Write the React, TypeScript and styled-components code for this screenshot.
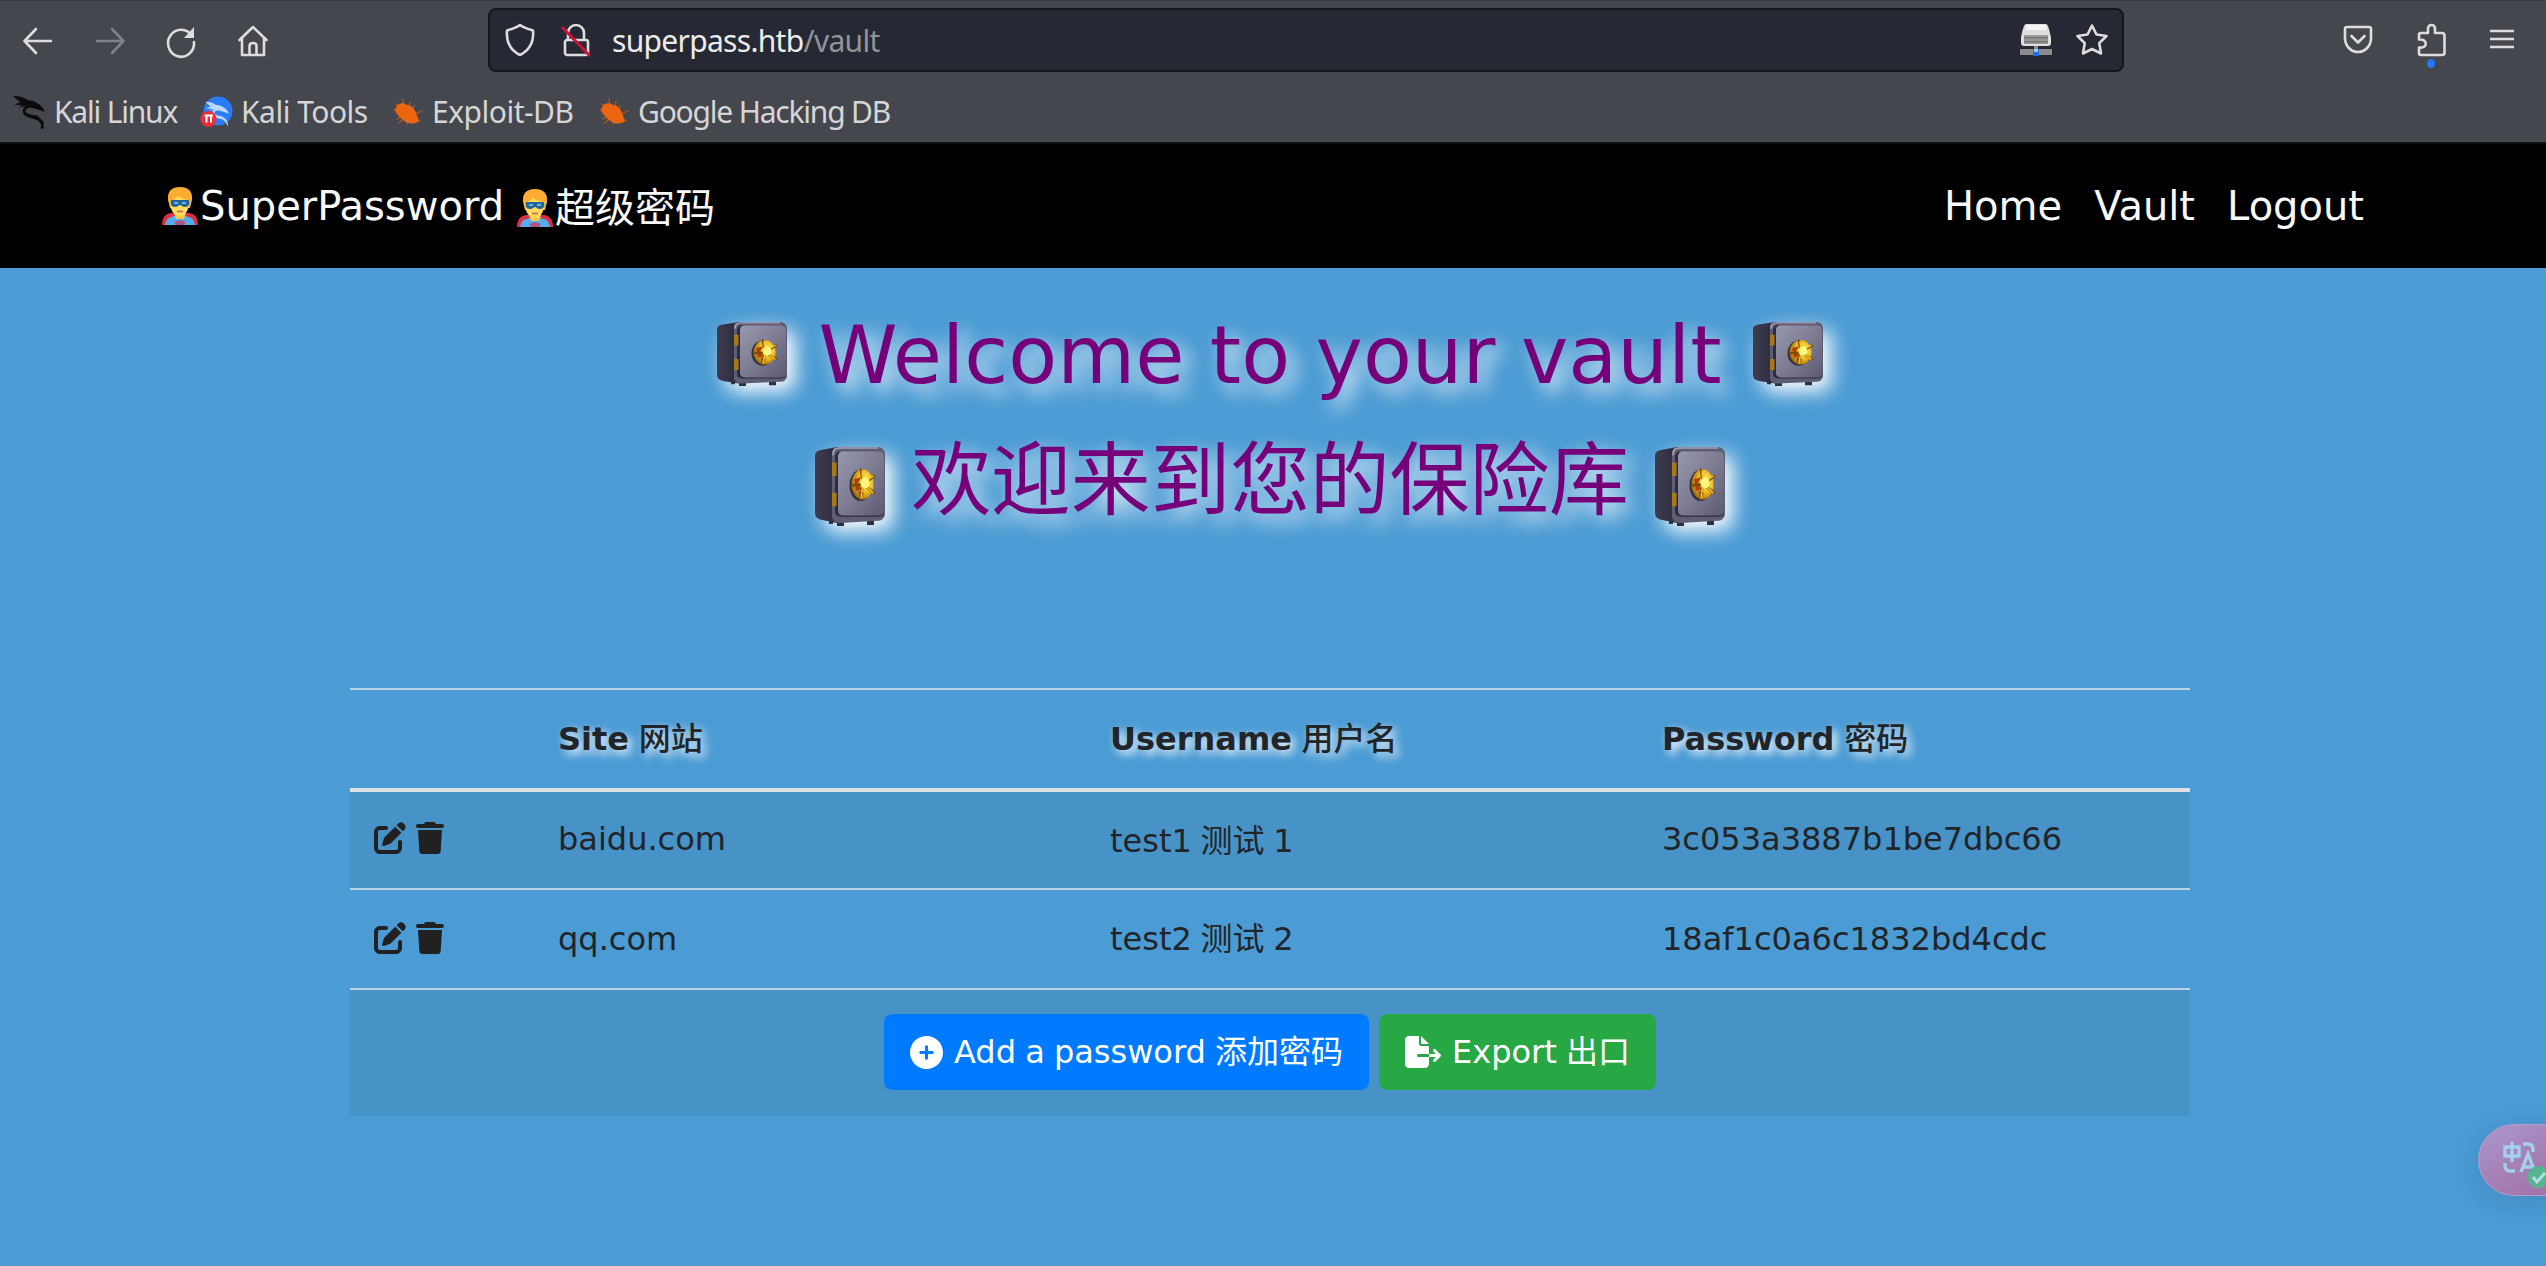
import React from 'react';
import styled, { createGlobalStyle, css } from 'styled-components';
import { FaPenToSquare, FaTrash, FaCirclePlus, FaFileExport } from 'react-icons/fa6';

const GlobalStyle = createGlobalStyle`
  *, *::before, *::after { box-sizing: border-box; }
  html, body { margin: 0; padding: 0; background: #4b9bd4; }
  body { overflow: hidden; }
`;

const Window = styled.div`
  width: 2546px;
  height: 1266px;
  display: flex;
  flex-direction: column;
  overflow: hidden;
  background: #4b9bd4;
  color: #212529;
  font-family: 'DejaVu Sans', 'Noto Sans CJK SC', sans-serif;
  font-size: 32px;
  line-height: 48px;
`;

/* ---------- browser chrome ---------- */

const Chrome = styled.header`
  height: 144px;
  flex: none;
  background: #45474e;
  border-top: 1px solid #393b44;
  border-bottom: 2px solid #0d0e10;
  font-family: 'Noto Sans', 'Open Sans', sans-serif;
  font-size: 30px;
  color: #d6d6d6;
`;

const Toolbar = styled.div`
  display: flex;
  align-items: center;
  height: 78px;
  padding-left: 21px;
`;

const NavButtons = styled.div`
  display: flex;
  align-items: center;
  gap: 37.5px;
  width: 467px;
  padding-top: 1px;
`;

const Glyph = styled.svg<{ $w?: number; $h?: number; $dim?: boolean }>`
  display: block;
  flex: none;
  width: ${p => p.$w ?? 34}px;
  height: ${p => p.$h ?? 34}px;
  overflow: visible;
  fill: none;
  stroke: ${p => (p.$dim ? '#808288' : '#dddddd')};
  stroke-width: 2.6;
  stroke-linecap: round;
  stroke-linejoin: round;
`;

const UrlBar = styled.div`
  display: flex;
  align-items: center;
  width: 1636px;
  height: 64px;
  padding: 0 13px 0 13px;
  background: #262833;
  border: 2px solid #14151b;
  border-radius: 8px;
`;

const UrlText = styled.span`
  flex: 1;
  margin-left: 19px;
  padding-top: 2px;
  color: #ececec;
  letter-spacing: -0.7px;
  white-space: pre;
`;

const UrlPath = styled.span`
  color: #92939a;
`;

const UrlActions = styled.div`
  display: flex;
  gap: 23px;
`;

const ShieldLock = styled.div`
  display: flex;
  gap: 22px;
`;

const ToolActions = styled.div`
  display: flex;
  align-items: center;
  gap: 42px;
  margin-left: 218px;
`;

const ExtensionButton = styled.div`
  position: relative;
`;

const UpdateDot = styled.span`
  position: absolute;
  left: 11px;
  top: 36px;
  width: 8px;
  height: 9px;
  border-radius: 50%;
  background: #2478ff;
`;

const Bookmarks = styled.div`
  display: flex;
  align-items: center;
  height: 65px;
  padding: 0 0 0 13px;
`;

const Bookmark = styled.div<{ $width: number; $track: number }>`
  display: flex;
  align-items: center;
  gap: 7px;
  width: ${p => p.$width}px;
  letter-spacing: ${p => p.$track}px;
  white-space: nowrap;
`;

/* ---------- site ---------- */

const SiteNav = styled.nav`
  display: flex;
  align-items: center;
  justify-content: space-between;
  flex: none;
  height: 124px;
  padding: 0 182px 0 161px;
  background: #000;
  color: #f8f9fa;
  font-size: 40px;
  line-height: 60px;
`;

const Brand = styled.div`
  display: flex;
  align-items: center;
  white-space: pre;
`;

const BrandPart = styled.span<{ $drop?: number }>`
  display: flex;
  align-items: center;
  gap: 1px;
  margin-right: 12px;
  padding-top: ${p => p.$drop ?? 0}px;
`;

const HeroIcon = styled.svg`
  display: block;
  width: 38px;
  height: 40px;
`;

const Links = styled.div`
  display: flex;
  gap: 32px;
`;

const Main = styled.main`
  display: flex;
  flex-direction: column;
  align-items: center;
  flex: 1;
  padding: 40px 6px 0 0;
`;

const Title = styled.h1<{ $cjk?: boolean }>`
  display: flex;
  align-items: center;
  margin: 0;
  gap: ${p => (p.$cjk ? 26 : 31)}px;
  height: ${p => (p.$cjk ? 128 : 96)}px;
  font-size: 80px;
  font-weight: 400;
  line-height: 96px;
  color: #75007a;
  text-shadow: 8px 8px 20px #fff;
  white-space: nowrap;
  ${p => p.$cjk && css`
    height: 138px;
    margin-bottom: 146px;
    font-family: 'Noto Sans CJK SC', sans-serif;
    letter-spacing: -0.3px;
  `}
`;

const SafeIcon = styled.svg<{ $h: number; $shift: number }>`
  display: block;
  width: 70px;
  height: ${p => p.$h}px;
  margin-top: ${p => p.$shift}px;
  overflow: visible;
  filter: drop-shadow(8px 8px 10px #fff);
`;

const Table = styled.div`
  width: 1840px;
  flex: none;
`;

const rowLayout = css`
  display: grid;
  grid-template-columns: 184px 552px 552px 552px;
`;

const HeadRow = styled.div`
  ${rowLayout}
  height: 104px;
  border-top: 2px solid #bcd3e6;
  border-bottom: 4px solid #dee2e6;
  font-weight: 700;
  text-shadow: 4px 4px 10px #fff;
`;

const EntryRow = styled.div<{ $first: boolean }>`
  ${rowLayout}
  height: ${p => (p.$first ? 96 : 100)}px;
  border-top: ${p => (p.$first ? '0' : '2px solid #bcd3e6')};
  background: ${p => (p.$first ? '#4793c8' : 'transparent')};
`;

const Cell = styled.div<{ $top?: number }>`
  padding: ${p => p.$top ?? 25}px 24px 0;
  white-space: nowrap;
  word-spacing: -1.5px;
`;

const HeadCjk = styled.span`
  font-weight: 500;
`;

const RowActions = styled.div<{ $top: number }>`
  display: flex;
  gap: 8px;
  padding: ${p => p.$top}px 24px 0;
  color: #212121;
`;

const TableFoot = styled.div`
  display: flex;
  justify-content: center;
  gap: 10px;
  height: 128px;
  padding-top: 24px;
  border-top: 2px solid #bcd3e6;
  background: #4793c8;
`;

const Button = styled.button<{ $tone: string }>`
  display: flex;
  align-items: center;
  gap: 11px;
  height: 76px;
  padding: 0 26px;
  border: 0;
  border-radius: 8px;
  background: ${p => p.$tone};
  color: #fff;
  font: inherit;
  word-spacing: -1px;
  white-space: nowrap;
`;

const TranslateTab = styled.div`
  position: fixed;
  left: 2478px;
  top: 1124px;
  width: 100px;
  height: 72px;
  padding: 15px 0 0 23px;
  border: 1px solid #b79bcb;
  border-radius: 36px;
  background: linear-gradient(150deg, #a993ca 10%, #a582b8 45%, #a472ab 85%);
  box-shadow: 0 6px 24px rgba(40, 80, 130, 0.22);
`;

/* ---------- drawings ---------- */

const Hero = () => (
  <HeroIcon viewBox="0 0 38 40">
    <path d="M1 39c0-8 4-12 10-12h16c6 0 10 4 10 12z" fill="#dd2e44" />
    <path d="M4 39c1-5 3-8 7-8l4-2h8l4 2c4 0 6 3 7 8z" fill="#55acee" />
    <path d="M13 27h12l-2 6h-8z" fill="#f7c948" />
    <path d="M13 36l6-2 6 2-2 3h-8z" fill="#b0557f" />
    <path d="M7 14C6 5 11 1 19 1s13 4 12 13l-2 8H9z" fill="#ffac33" />
    <path d="M9 15c4-1 6-3 8-5 3 2 7 4 12 4-1 9-4 16-10 16S9 24 9 15z" fill="#ffdc5d" />
    <path d="M10 14h18c1 4 0 7-4 7-3 0-4-2-5-2s-2 2-5 2c-4 0-5-3-4-7z" fill="#226699" />
    <path d="M13 17h4M21 17h4" stroke="#69b2e8" strokeWidth="2" />
    <path d="M16 25.5h6" stroke="#c1694f" strokeWidth="1.6" />
  </HeroIcon>
);

const Safe = ({ id, h, shift }: { id: string; h: number; shift: number }) => (
  <SafeIcon $h={h} $shift={shift} viewBox="0 0 70 76" preserveAspectRatio="none">
    <defs>
      <linearGradient id={`${id}-door`} x1="0" y1="0" x2="1" y2="1">
        <stop offset="0" stopColor="#9898ae" />
        <stop offset="0.5" stopColor="#7d7c93" />
        <stop offset="1" stopColor="#5d5b72" />
      </linearGradient>
      <linearGradient id={`${id}-side`} x1="0" y1="0" x2="1" y2="0">
        <stop offset="0" stopColor="#3e3d50" />
        <stop offset="1" stopColor="#2c2b3c" />
      </linearGradient>
      <radialGradient id={`${id}-dial`} cx="0.65" cy="0.4" r="0.7">
        <stop offset="0" stopColor="#fff06a" />
        <stop offset="0.55" stopColor="#e9b51c" />
        <stop offset="1" stopColor="#93600d" />
      </radialGradient>
    </defs>
    <path d="M22 71h7v5h-7zM52 70h7v5h-7zM14 70h4v4h-4z" fill="#302f3f" />
    <path d="M0 9C0 5 2 4 6 3L22 0v73L6 70c-4-1-6-3-6-7z" fill={`url(#${id}-side)`} />
    <path d="M17 6c0-4 2-6 6-6h40c4 0 7 3 7 7v57c0 4-3 7-7 7l-38 2c-5 0-8-2-8-7z" fill="#5f5d75" />
    <path d="M18 8c0-5 2-7 6-7h39" fill="none" stroke="#a3a3b8" strokeWidth="1.6" />
    <path d="M20 10c0-4 2-6 6-6h38c3 0 5 2 5 5v53c0 3-2 5-5 5H27c-5 0-7-2-7-5z" fill="#2d2c3c" />
    <path d="M23 9c0-3 2-5 5-5h36c3 0 5 2 5 5v52c0 3-2 5-5 5H29c-4 0-6-2-6-5z" fill={`url(#${id}-door)`} />
    <path d="M17 15h4.500v13H17zM17 44h4.500v13H17z" fill="#a77a17" />
    <ellipse cx="45.500" cy="37" rx="11" ry="15" fill="#34313e" />
    <ellipse cx="47.500" cy="36" rx="11" ry="14.500" fill={`url(#${id}-dial)`} />
    <path d="M39 31l7-2-3 6 4 6-6 1zM43 42l6 2-3 5z" fill="#b53d0c" />
    <path d="M48 36l-2-14M48 36l11-8M48 36l11 8M48 36l-3 14M48 36l-11 1" stroke="#7b4d08" strokeWidth="2.600" strokeLinecap="round" />
    <path d="M48 35l-1-12M48 35l10-7M49 36l9 8M48 36l-2 13" stroke="#f4c832" strokeWidth="1.500" strokeLinecap="round" />
    <ellipse cx="50" cy="34.500" rx="4.500" ry="5.500" fill="#fff47c" />
  </SafeIcon>
);

const DragonPath = () => (
  <path d="M0 1c6 0 10 1 14 4 6 0 10 3 14 7l2 4-5-2-8-2c-4 0-6 2-5 4 2 3 9 2 12 5 4 3 5 7 5 11l-3-5c-3-6-11-4-15-8-3-3-2-7 1-9L4 13l5-3-8-1 6-2z" fill="currentColor" />
);

const KaliIcon = () => (
  <Glyph viewBox="0 0 32 32" color="#0b0b0c">
    <g stroke="none"><DragonPath /></g>
    <path d="M22 20l6 6-1 5" stroke="#0b0b0c" strokeWidth="2" />
  </Glyph>
);

const KaliToolsIcon = () => (
  <Glyph viewBox="0 0 34 34" color="#b9d8ff">
    <circle cx="18" cy="16" r="14.500" fill="#2a7cf6" stroke="none" />
    <g transform="translate(5 6) scale(.8)" stroke="none"><DragonPath /></g>
    <circle cx="8.500" cy="24" r="8" fill="#e92f37" stroke="none" />
    <path d="M4.500 20.500h8.500M6.500 20.500v7M11 20.500v7" stroke="#fff" strokeWidth="2" strokeLinecap="butt" />
  </Glyph>
);

const BugIcon = () => (
  <Glyph viewBox="0 0 34 34">
    <path d="M5 9l5 4M12 4l1 7M19 7l-1 5M3 15l7 1M6 24l6-4M23 11l-3 4M31 16l-7 3M29 26l-5-2M16 29l2-5M8 28l6-6" stroke="#b4571f" strokeWidth="1.300" />
    <path d="M5 12c2-4 7-5 11-2 4 0 7 3 9 8l3 8c-2 2-8 4-13 1-4-2-6-5-9-8-2-2-2-5-1-7z" fill="#ee650f" stroke="none" />
  </Glyph>
);

const DriveIcon = () => (
  <Glyph viewBox="0 0 32 34" $w={32}>
    <g stroke="none">
      <path d="M6 1h20c2 0 3 5 5 13v6c0 2-1 3-3 3H4c-2 0-3-1-3-3v-6C3 6 4 1 6 1z" fill="#dedede" />
      <path d="M7 2h18l2 5H5z" fill="#f5f5f5" />
      <path d="M4 12h24v9H4z" fill="#999" />
      <path d="M4 14h24v1.500H4zM4 18h24v1.500H4z" fill="#777" />
      <path d="M14 23h4v4h-4zM0 26h32v6H0z" fill="#8c8c8c" />
      <path d="M13 26h6v7h-6z" fill="#226ce0" />
      <path d="M14 26h4v3h-4z" fill="#a8c8f4" />
    </g>
  </Glyph>
);

const TranslateIcon = () => (
  <svg width="50" height="48" viewBox="0 0 50 48" fill="none" stroke="#a6cfee" strokeWidth="3.400">
    <path d="M3 7h14v9H3zM10 2v20" />
    <path d="M21 4h5c3 0 5 2 5 6v2" />
    <path d="M3 23v3c0 3 2 5 5 5h5" />
    <path d="M19 32l7-18 7 18M21 27h10" />
    <circle cx="36.500" cy="37" r="11" fill="#58b48f" stroke="none" />
    <path d="M31 37l4 5 8-9" stroke="#b4dcea" strokeWidth="3" />
  </svg>
);

/* ---------- data ---------- */

const entries = [
  { site: 'baidu.com', user: 'test1 测试 1', password: '3c053a3887b1be7dbc66', top: 23, userTop: 25, iconTop: 30 },
  { site: 'qq.com', user: 'test2 测试 2', password: '18af1c0a6c1832bd4cdc', top: 25, userTop: 25, iconTop: 32 },
];

export default function App() {
  return (
    <Window>
      <GlobalStyle />
      <Chrome>
        <Toolbar>
          <NavButtons>
            <Glyph viewBox="0 0 34 34"><path d="M30 17H4M15 5L3.500 17 15 29" /></Glyph>
            <Glyph viewBox="0 0 34 34" $dim><path d="M4 17h26M19 5l11.500 12L19 29" /></Glyph>
            <Glyph viewBox="0 0 34 34">
              <path d="M28 12A13 13.500 0 1 0 30 18" />
              <path d="M30 3v11H20z" fill="#ddd" stroke="none" />
            </Glyph>
            <Glyph viewBox="0 0 34 34">
              <path d="M3.500 16L17 3l13.500 13M6 14v17h22V14M13.500 31V22c0-2 1-3 3.500-3s3.500 1 3.500 3v9" />
            </Glyph>
          </NavButtons>
          <UrlBar>
            <ShieldLock>
              <Glyph viewBox="0 0 34 34">
                <path d="M17 2C13 5 9 6 4 7.500c-1 12 4 20 13 24.500 9-4.500 14-12.500 13-24.500C25 6 21 5 17 2z" />
              </Glyph>
              <Glyph viewBox="0 0 34 34">
                <path d="M9 16V10a8 8 0 0 1 16 0v6M8 17h19c1.500 0 2 1 2 2v11c0 1-1 2-2 2H8c-1 0-2-1-2-2V19c0-1 1-2 2-2z" />
                <path d="M4 5l26 27" stroke="#d2103c" strokeWidth="3" />
              </Glyph>
            </ShieldLock>
            <UrlText>superpass.htb<UrlPath>/vault</UrlPath></UrlText>
            <UrlActions>
              <DriveIcon />
              <Glyph viewBox="0 0 34 34">
                <path d="M17 2.500l4.500 9 10 1.500-7.200 7.200 1.700 10.300L17 26l-9 4.500 1.700-10.300L2.500 13l10-1.500z" />
              </Glyph>
            </UrlActions>
          </UrlBar>
          <ToolActions>
            <Glyph viewBox="0 0 32 32" $w={32} $h={32}>
              <path d="M5 3h22c1.500 0 2 1 2 2v9c0 8-6 14-13 14S3 22 3 14V5c0-1 .5-2 2-2zM9.500 12l6.500 6.500L22.500 12" />
            </Glyph>
            <ExtensionButton>
              <Glyph viewBox="0 0 32 34" $w={32}>
                <path d="M12 10V5.500a3.500 3.500 0 0 1 7 0V10h7c2 0 2.500 1 2.500 2.500V30c0 1-1 2-2.500 2H5c-1.500 0-2-1-2-2v-5.500c9 1.500 9-9 0-8V12c0-1 .5-2 2-2z" />
              </Glyph>
              <UpdateDot />
            </ExtensionButton>
            <Glyph viewBox="0 0 24 34" $w={24}><path d="M0 8h24M0 16h24M0 24h24" strokeLinecap="butt" /></Glyph>
          </ToolActions>
        </Toolbar>
        <Bookmarks>
          <Bookmark $width={187} $track={-1.2}><KaliIcon />Kali Linux</Bookmark>
          <Bookmark $width={191} $track={-0.5}><KaliToolsIcon />Kali Tools</Bookmark>
          <Bookmark $width={206} $track={-0.5}><BugIcon />Exploit-DB</Bookmark>
          <Bookmark $width={300} $track={-1.2}><BugIcon />Google Hacking DB</Bookmark>
        </Bookmarks>
      </Chrome>

      <SiteNav>
        <Brand>
          <BrandPart><Hero />SuperPassword</BrandPart>
          <BrandPart $drop={4}><Hero />超级密码</BrandPart>
        </Brand>
        <Links>
          <span>Home</span>
          <span>Vault</span>
          <span>Logout</span>
        </Links>
      </SiteNav>

      <Main>
        <Title>
          <Safe id="s1" h={64} shift={-4} />
          <span>Welcome to your vault</span>
          <Safe id="s2" h={64} shift={-4} />
        </Title>
        <Title $cjk>
          <Safe id="s3" h={79} shift={26} />
          <span>欢迎来到您的保险库</span>
          <Safe id="s4" h={79} shift={26} />
        </Title>

        <Table>
          <HeadRow>
            <Cell />
            <Cell>Site <HeadCjk>网站</HeadCjk></Cell>
            <Cell>Username <HeadCjk>用户名</HeadCjk></Cell>
            <Cell>Password <HeadCjk>密码</HeadCjk></Cell>
          </HeadRow>
          {entries.map((e, i) => (
            <EntryRow key={e.site} $first={i === 0}>
              <RowActions $top={e.iconTop}><FaPenToSquare size={32} /><FaTrash size={32} /></RowActions>
              <Cell $top={e.top}>{e.site}</Cell>
              <Cell $top={e.userTop}>{e.user}</Cell>
              <Cell $top={e.top}>{e.password}</Cell>
            </EntryRow>
          ))}
          <TableFoot>
            <Button $tone="#007bff"><FaCirclePlus size={33} /><span>Add a password 添加密码</span></Button>
            <Button $tone="#28a745"><FaFileExport size={36} /><span>Export 出口</span></Button>
          </TableFoot>
        </Table>
      </Main>

      <TranslateTab><TranslateIcon /></TranslateTab>
    </Window>
  );
}
